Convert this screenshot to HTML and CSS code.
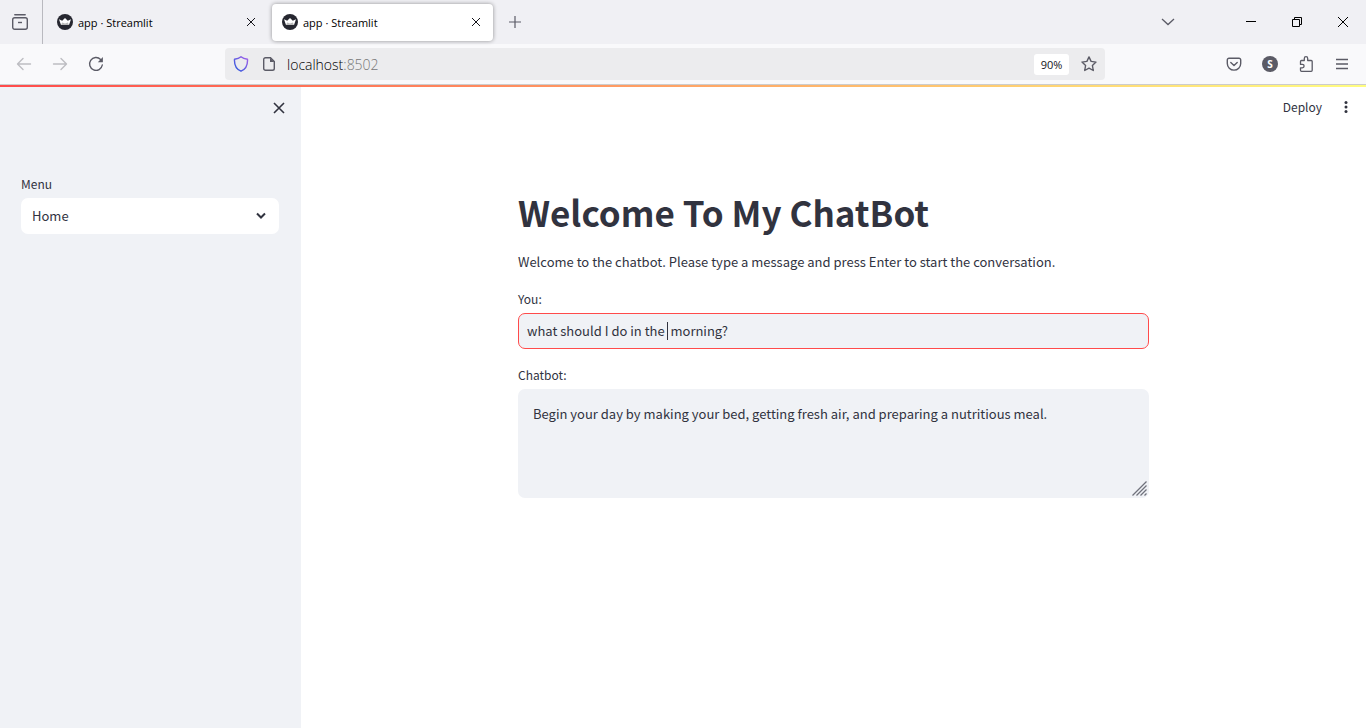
FILE: index.html
```html
<!DOCTYPE html>
<html lang="en">
<head>
<meta charset="utf-8">
<meta name="viewport" content="width=device-width, initial-scale=1">
<title>app · Streamlit</title>
<link rel="stylesheet" href="styles.css">
</head>
<body>
<svg class="defs" aria-hidden="true">
  <symbol id="close" viewBox="0 0 10 10"><path d="M1 1l8 8M9 1L1 9" fill="none" stroke="currentColor"/></symbol>
  <symbol id="crown" viewBox="0 0 16 16"><circle cx="8" cy="8" r="8" fill="#262730"/><path d="M2 5.200l3.200 1.600L8 4l2.800 2.800L14 5.200l-2 5.800H4z" fill="#fff"/><path d="M4 11l1.200-2.600L8 9.500l2.800-1.100L12 11z" fill="#bbb"/></symbol>
</svg>
<header class="browser">
  <div class="tabstrip">
    <button class="view" aria-label="Firefox View">
      <svg width="18" height="18" viewBox="0 0 18 18" fill="none" stroke="#5b5b66" stroke-width="1.4"><path d="M3.800 1.700h10.400" stroke-linecap="round"/><rect x="1.700" y="4.700" width="14.600" height="11.600" rx="2"/><path d="M7 9.500h4"/></svg>
    </button>
    <div class="tab">
      <svg width="16" height="16"><use href="#crown"/></svg>
      <span class="tab-title">app · Streamlit</span>
      <button class="tab-close" aria-label="Close tab"><svg width="10" height="10"><use href="#close"/></svg></button>
    </div>
    <div class="tab active">
      <svg width="16" height="16"><use href="#crown"/></svg>
      <span class="tab-title">app · Streamlit</span>
      <button class="tab-close" aria-label="Close tab"><svg width="10" height="10"><use href="#close"/></svg></button>
    </div>
    <button class="new-tab" aria-label="New tab"><svg width="12" height="12" viewBox="0 0 12 12"><path d="M6 0v12M0 6h12" stroke="#5b5b66" stroke-width="1.2"/></svg></button>
    <div class="window-buttons">
      <button class="list-tabs" aria-label="List all tabs"><svg width="14" height="8" viewBox="0 0 14 8"><path d="M1 1l6 5.5L13 1" fill="none" stroke="#5b5b66" stroke-width="1.3"/></svg></button>
      <button aria-label="Minimize"><svg width="10" height="10" viewBox="0 0 10 10"><path d="M0 4.5h10" stroke="#000"/></svg></button>
      <button aria-label="Restore"><svg width="10" height="10" viewBox="0 0 10 10"><path d="M.5 2.5h7v7h-7zM2.5 2.500V.5h7v7h-2" fill="none" stroke="#000"/></svg></button>
      <button aria-label="Close"><svg width="12" height="12" viewBox="0 0 12 12"><path d="M1 1l10 10M11 1L1 11" stroke="#000"/></svg></button>
    </div>
  </div>
  <div class="toolbar">
    <div class="nav">
      <button aria-label="Back"><svg width="16" height="16" viewBox="0 0 16 16" fill="none" stroke="#bdbdc2" stroke-width="1.4" stroke-linecap="round" stroke-linejoin="round"><path d="M14.500 8H2M7 2.500L1.500 8 7 13.500"/></svg></button>
      <button aria-label="Forward"><svg width="16" height="16" viewBox="0 0 16 16" fill="none" stroke="#bdbdc2" stroke-width="1.4" stroke-linecap="round" stroke-linejoin="round"><path d="M1.500 8H14M9 2.500L14.500 8 9 13.500"/></svg></button>
      <button aria-label="Reload"><svg width="16" height="16" viewBox="0 0 16 16"><path d="M12.600 3.500A6.400 6.400 0 1 0 14.300 9" fill="none" stroke="#5b5b66" stroke-width="1.400" stroke-linecap="round"/><path d="M14.900 1v5.200H9.800z" fill="#5b5b66"/></svg></button>
    </div>
    <div class="urlbar">
      <svg width="16" height="16" viewBox="0 0 16 16" fill="none"><defs><linearGradient id="shield" x1="0" y1="1" x2="1" y2="0"><stop stop-color="#2859db"/><stop offset="1" stop-color="#a45fea"/></linearGradient></defs><path d="M8 .8c2 1.700 4 2.200 6.500 2.500.3 5.500-1.500 9.700-6.500 11.900C3 13 1.200 8.800 1.500 3.300 4 3 6 2.500 8 .8z" stroke="url(#shield)" stroke-width="1.400" stroke-linejoin="round"/></svg>
      <svg width="12" height="14" viewBox="0 0 12 14"><path d="M2.500.7h5l3.800 3.800v7a1.800 1.800 0 0 1-1.800 1.800h-7a1.800 1.800 0 0 1-1.800-1.800v-9A1.800 1.800 0 0 1 2.500.7z" fill="none" stroke="#5b5b66" stroke-width="1.400"/><path d="M7 .7V5h4.300z" fill="#5b5b66"/></svg>
      <span class="url">localhost<span class="port">:8502</span></span>
      <button class="zoom">90%</button>
      <button class="star" aria-label="Bookmark this page"><svg width="16" height="16" viewBox="0 0 16 16"><path d="M8 .9l2.100 4.500 4.900.7-3.600 3.400.9 5L8 12.100l-4.300 2.400.9-5L1 6.100l4.900-.7z" fill="none" stroke="#5b5b66" stroke-width="1.400" stroke-linejoin="round"/></svg></button>
    </div>
    <div class="tools">
      <button aria-label="Save to Pocket"><svg width="16" height="16" viewBox="0 0 16 16" fill="none" stroke="#5b5b66" stroke-width="1.400" stroke-linecap="round" stroke-linejoin="round"><path d="M3 2.200h10a1.700 1.700 0 0 1 1.700 1.700v3.500a6.700 6.700 0 0 1-13.400 0V3.900A1.700 1.700 0 0 1 3 2.200z"/><path d="M4.800 6.500L8 9.500l3.200-3"/></svg></button>
      <button class="account" aria-label="Account">S</button>
      <button aria-label="Extensions"><svg width="16" height="16" viewBox="0 0 16 16" fill="none" stroke="#5b5b66" stroke-width="1.300" stroke-linejoin="round"><path d="M6.300 4.500V2.400a1.700 1.700 0 0 1 3.400 0v2.100h3.500c.7 0 1 .4 1 1v8.800c0 .6-.4 1-1 1H3.500c-.6 0-1-.4-1-1v-2.500h1.900a1.700 1.700 0 0 0 0-3.400H2.500V5.500c0-.6.4-1 1-1z"/></svg></button>
      <button aria-label="Open application menu"><svg width="12" height="12" viewBox="0 0 12 12"><path d="M0 1.500h12M0 6h12M0 10.500h12" stroke="#5b5b66" stroke-width="1.300"/></svg></button>
    </div>
  </div>
</header>
<div class="decoration"></div>
<div class="app">
  <aside class="sidebar">
    <button class="sidebar-close" aria-label="Close sidebar"><svg width="12" height="12" viewBox="0 0 12 12"><path d="M1 1l10 10M11 1L1 11" stroke="#31333f" stroke-width="1.600"/></svg></button>
    <div class="field">
      <label for="menu">Menu</label>
      <div class="select-box">
        <select id="menu"><option>Home</option></select>
        <svg class="chevron" width="10" height="8" viewBox="0 0 10 8"><path d="M1 1.500l4 4 4-4" fill="none" stroke="#31333f" stroke-width="2"/></svg>
      </div>
    </div>
  </aside>
  <main class="main">
    <div class="app-header">
      <button class="deploy">Deploy</button>
      <button class="more" aria-label="Main menu"><svg width="4" height="12" viewBox="0 0 4 12" fill="#31333f"><circle cx="2" cy="1.600" r="1.500"/><circle cx="2" cy="6" r="1.500"/><circle cx="2" cy="10.400" r="1.500"/></svg></button>
    </div>
    <div class="content">
      <h1>Welcome To My ChatBot</h1>
      <p>Welcome to the chatbot. Please type a message and press Enter to start the conversation.</p>
      <div class="field">
        <label for="you">You:</label>
        <div class="input-box">
          <input id="you" type="text" value="what should I do in the  morning?">
          <span class="caret"></span>
        </div>
      </div>
      <div class="field">
        <label for="bot">Chatbot:</label>
        <div class="input-box">
          <textarea id="bot">Begin your day by making your bed, getting fresh air, and preparing a nutritious meal.</textarea>
          <svg class="grip" width="15" height="15" viewBox="0 0 15 15"><path d="M.5 14.500l14-14M4.500 14.500l10-10M8.500 14.500l6-6M12.500 14.500l2-2" stroke="#70727c" stroke-width="1.300"/></svg>
        </div>
      </div>
    </div>
  </main>
</div>
</body>
</html>
```
FILE: styles.css
```css
* { box-sizing: border-box; }
body {
  margin: 0;
  min-height: 100vh;
  display: flex;
  flex-direction: column;
  background: #fff;
  color: #31333f;
  font-family: "Noto Sans CJK SC", sans-serif;
  font-size: 13px;
}
button {
  display: flex;
  align-items: center;
  justify-content: center;
  padding: 0;
  border: 0;
  background: none;
  color: inherit;
  font: inherit;
}
svg { display: block; flex: none; }
.defs { position: absolute; width: 0; height: 0; }

.browser { font-family: "Open Sans", "Noto Sans", sans-serif; color: #15141a; }
.tabstrip { display: flex; align-items: center; height: 44px; background: #f0f0f4; }
.view { width: 43px; height: 44px; padding-right: 2px; border-right: 1px solid #b9b9bf; }
.tab {
  display: flex;
  align-items: center;
  gap: 5px;
  width: 221px;
  height: 37px;
  margin-left: 4px;
  padding: 0 12px 0 10px;
  border-radius: 4px;
  font-size: 11px;
}
.tab.active { background: #fff; box-shadow: 0 0 4px rgba(0, 0, 0, .4); }
.tab-title { flex: 1; color: #000; }
.new-tab { width: 43px; height: 36px; }
.window-buttons { display: flex; margin-left: auto; }
.window-buttons button { width: 46px; height: 44px; }
.window-buttons .list-tabs { width: 36px; margin-right: 42px; }

.toolbar {
  display: flex;
  align-items: center;
  justify-content: space-between;
  height: 41px;
  padding: 0 16px;
  background: #f9f9fb;
  border-bottom: 1px solid #ccc;
}
.nav, .tools { display: flex; gap: 20px; flex: none; }
.nav button, .tools button { width: 16px; height: 16px; }
.tools .account { border-radius: 50%; background: #5b5b66; color: #fff; font-size: 10px; font-weight: 700; }
.urlbar {
  display: flex;
  align-items: center;
  flex: 0 1 880px;
  height: 32px;
  padding: 0 8px;
  border-radius: 4px;
  background: #ececee;
}
.urlbar > svg + svg { margin-left: 14px; }
.url { flex: 1; margin-left: 12px; color: #000; font-size: 14px; font-weight: 300; }
.port { color: #777; }
.zoom { width: 35px; height: 21px; border-radius: 3px; background: #fff; font-size: 11px; }
.star { margin-left: 12px; }

.decoration { height: 2px; background: linear-gradient(90deg, #ff4b4b, #fffd80); }
.app { display: flex; flex: 1; }
.sidebar { flex: none; width: 301px; padding: 15px 22px 0 21px; background: #f0f2f6; }
.sidebar-close { width: 12px; height: 12px; margin: 0 -6px 61px auto; }
.main { flex: 1; }
.app-header {
  display: flex;
  align-items: center;
  justify-content: flex-end;
  gap: 22px;
  height: 40px;
  padding-right: 18px;
  font-size: 12px;
}
.deploy { height: 18px; padding-bottom: 2px; }
.content { max-width: 631px; margin: 0 auto; padding-top: 59px; }
h1 { margin: 0; font-size: 35px; line-height: 52px; font-weight: 700; }
p { margin: 12px 0 16px; line-height: 24px; }
.field { margin-bottom: 17px; }
label { display: block; margin-bottom: 5px; font-size: 12px; line-height: 18px; }
.select-box, .input-box { position: relative; }
select, input, textarea {
  display: block;
  width: 100%;
  border: 1px solid transparent;
  border-radius: 7px;
  outline: 0;
  appearance: none;
  color: inherit;
  font: inherit;
}
select { height: 36px; padding: 0 10px 2px; background: #fff; }
.chevron { position: absolute; right: 13px; top: 14px; }
input { height: 36px; padding: 0 8px 2px; border-color: #ff4b4b; background: #f0f2f6; }
.caret { position: absolute; left: 149px; top: 9px; width: 1px; height: 18px; background: #31333f; }
textarea { height: 109px; padding: 13px 14px; line-height: 21px; resize: none; background: #f0f2f6; }
.grip { position: absolute; right: 2px; bottom: 2px; }
```
